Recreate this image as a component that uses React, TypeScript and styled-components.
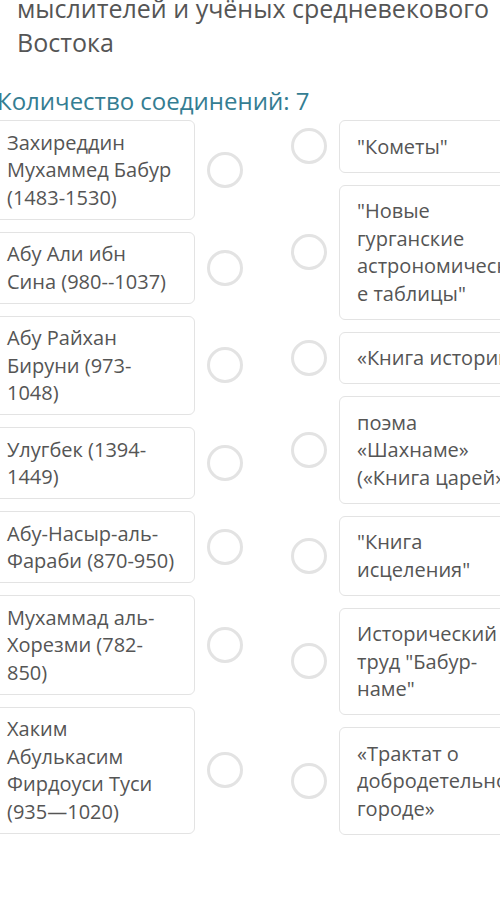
import React from "react";
import { createGlobalStyle, styled } from "styled-components";

interface Pair {
  text: string;
}

const leftItems: Pair[] = [
  { text: "Захиреддин Мухаммед Бабур (1483-1530)" },
  { text: "Абу Али ибн Сина (980--1037)" },
  { text: "Абу Райхан Бируни (973-1048)" },
  { text: "Улугбек (1394-1449)" },
  { text: "Абу-Насыр-аль-Фараби (870-950)" },
  { text: "Мухаммад аль-Хорезми (782-850)" },
  { text: "Хаким Абулькасим Фирдоуси Туси (935—1020)" },
];

const rightItems: Pair[] = [
  { text: "\"Кометы\"" },
  { text: "\"Новые гурганские астрономические таблицы\"" },
  { text: "«Книга историй»" },
  { text: "поэма «Шахнаме» («Книга царей»)" },
  { text: "\"Книга исцеления\"" },
  { text: "Исторический труд \"Бабур-наме\"" },
  { text: "«Трактат о добродетельном городе»" },
];

export default function App() {
  return (
    <>
      <GlobalStyle />
      <Page>
        <Title>мыслителей и учёных средневекового Востока</Title>
        <Counter>Количество соединений: 7</Counter>
        <Board>
          <Column>
            {leftItems.map((item) => (
              <Row key={item.text}>
                <Card $pad={7.5}>{item.text}</Card>
                <Dot />
              </Row>
            ))}
          </Column>
          <Column>
            {rightItems.map((item) => (
              <Row key={item.text}>
                <Dot />
                <Card $pad={11.5}>{item.text}</Card>
              </Row>
            ))}
          </Column>
        </Board>
      </Page>
    </>
  );
}

//styled-component
const GlobalStyle = createGlobalStyle`
  html, body {
    margin: 0;
    padding: 0;
    background: #ffffff;
    overflow: hidden;
  }
  body {
    font-family: "Open Sans", "Noto Sans", sans-serif;
  }
`;

const Page = styled.div`
  width: 600px;
  margin-left: -11px;
`;

const Title = styled.h2`
  margin: -8px 0 0 28px;
  width: 490px;
  font-size: 25px;
  line-height: 33.5px;
  font-weight: 400;
  color: #555555;
`;

const Counter = styled.div`
  margin: 25.5px 0 0 8px;
  font-size: 24px;
  line-height: 32px;
  color: #347d92;
`;

const Board = styled.div`
  display: flex;
  align-items: flex-start;
  gap: 48px;
  margin-top: 3.5px;
`;

const Column = styled.div`
  display: flex;
  flex-direction: column;
  gap: 12px;
`;

const Row = styled.div`
  display: flex;
  align-items: center;
  gap: 12px;
`;

const Card = styled.div<{ $pad: number }>`
  width: 206px;
  box-sizing: border-box;
  padding: ${({ $pad }) => $pad}px 17px;
  border: 1px solid #e3e3e3;
  border-radius: 6px;
  background: #ffffff;
  font-size: 20px;
  line-height: 27.5px;
  color: #555555;
  overflow-wrap: break-word;
`;

const Dot = styled.span`
  flex: none;
  width: 36px;
  height: 36px;
  box-sizing: border-box;
  border: 3px solid #e3e3e3;
  border-radius: 50%;
`;
